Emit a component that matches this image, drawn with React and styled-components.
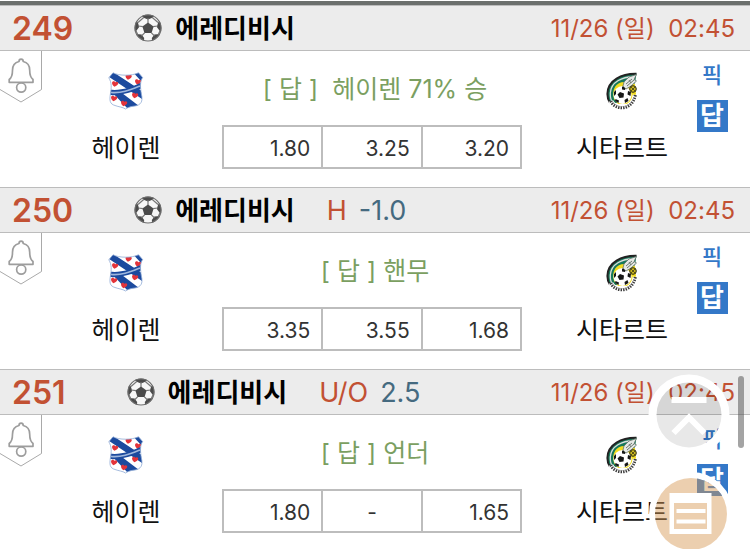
import React from "react";
import styled, { createGlobalStyle, css } from "styled-components";

const GlobalStyle = createGlobalStyle`
  *, *::before, *::after { box-sizing: border-box; }
  html { scrollbar-width: none; }
  body {
    margin: 0;
    background: #fff;
    color: #111;
    font-family: Inter, "Noto Sans CJK KR", sans-serif;
  }
  button { font: inherit; color: inherit; background: none; border: 0; padding: 0; cursor: pointer; }
`;

const RED = "#c25133";
const BLUE = "#3478c8";

const Page = styled.main`
  padding-top: 1px;
`;

const TopRule = styled.div`
  height: 4px;
  background: #6c706d;
`;

const Header = styled.header`
  display: flex;
  align-items: center;
  height: 46px;
  padding: 0 15px 0 12px;
  background: #ececec;
  border-top: 1px solid #bcbcbc;
  border-bottom: 1px solid #bcbcbc;
  white-space: nowrap;
`;

const MatchNumber = styled.span`
  margin-right: 61px;
  padding-top: 2px;
  color: ${RED};
  font-size: 32px;
  font-weight: 600;
  line-height: 42px;
`;

const League = styled.h2`
  margin: 0 32px 0 13px;
  padding-top: 2px;
  color: #000;
  font-size: 26px;
  font-weight: 600;
  line-height: 42px;
`;

const MarketKind = styled.span`
  margin-right: 12px;
  color: ${RED};
  font-size: 27px;
`;

const MarketLine = styled.span`
  color: #456a80;
  font-size: 27px;
`;

const Kickoff = styled.time`
  margin-left: auto;
  padding-top: 2px;
  color: ${RED};
  font-size: 24px;
  line-height: 42px;
  white-space: pre;
`;

const Body = styled.div`
  display: grid;
  grid-template-columns: 74px 104px 1fr 112px 68px;
  align-items: start;
  height: 136px;
  padding-right: 4px;
`;

const AlarmButton = styled.button`
  display: block;
  justify-self: start;
  line-height: 0;
`;

const Team = styled.div`
  display: flex;
  flex-direction: column;
  align-items: center;
  gap: 17px;
  padding-top: 21px;
  font-size: 25px;
  line-height: 40px;
  white-space: nowrap;
`;

const Middle = styled.div`
  display: flex;
  flex-direction: column;
  align-items: center;
  gap: 16px;
  padding-top: 18px;
`;

const Answer = styled.p`
  margin: 0;
  padding-left: 6px;
  color: #7b9f61;
  font-size: 25px;
  line-height: 40px;
  white-space: pre;
`;

const Odds = styled.table`
  width: 300px;
  table-layout: fixed;
  border-collapse: collapse;
`;

const Odd = styled.td`
  height: 42px;
  padding: 2px 11px 0;
  border: 2px solid #bdbdbd;
  color: #333;
  font-size: 21px;
  text-align: ${(p) => (p.$empty ? "center" : "right")};
`;

const Picks = styled.div`
  display: flex;
  flex-direction: column;
  align-items: center;
  gap: 9px;
  padding-top: 8px;
`;

const PickButton = styled.button`
  height: 32px;
  color: ${BLUE};
  font-size: 22px;
  font-weight: 500;
  line-height: 32px;
  ${(p) =>
    p.$filled &&
    css`
      width: 31px;
      background: ${BLUE};
      color: #fff;
      font-size: 26px;
      font-weight: 700;
    `}
`;

const FloatingButton = styled.button`
  position: fixed;
  right: ${(p) => p.$right}px;
  bottom: ${(p) => p.$bottom}px;
  line-height: 0;
`;

const ScrollThumb = styled.div`
  position: fixed;
  right: 6px;
  bottom: 101px;
  width: 6px;
  height: 72px;
  border-radius: 3px;
  background: rgba(80, 80, 80, 0.52);
`;

function Bell() {
  return (
    <svg width="42" height="52" viewBox="0 0 42 52" fill="none" aria-hidden="true">
      <path d="M41.5 0V38.5L21 51L0 38.5" stroke="#a9a9a9" />
      <g stroke="#9d9d9d" strokeWidth="1.7" strokeLinejoin="round">
        <path d="M19 10.5C19 7.3 23.2 7.3 23.2 10.5C28 11.5 29.7 15 29.7 19.3C29.7 24.5 30.4 26.5 33 28.5V31.3H9.2V28.5C12 26.5 12.5 24.5 12.5 19.3C12.5 15 14.5 11.5 19 10.5Z" />
        <circle cx="21.2" cy="36.6" r="4.6" />
      </g>
    </svg>
  );
}

function SoccerBall() {
  return (
    <svg width="28" height="28" viewBox="0 0 28 28" aria-hidden="true">
      <defs>
        <clipPath id="ball"><circle cx="14" cy="14" r="13.4" /></clipPath>
      </defs>
      <circle cx="14" cy="14" r="13.4" fill="#f7f7f7" />
      <g clipPath="url(#ball)">
        <g fill="#4b4b4b">
          <path d="M14 8.5L19.6 12.5L17.6 19H10.4L8.4 12.5Z" />
          <path d="M7 0H21L19 3.4L14 5.6L9 3.4Z" />
          <path d="M-1 6L3.8 8.2L5.2 13L1.8 17.5H-1Z" />
          <path d="M29 6L24.2 8.2L22.8 13L26.2 17.5H29Z" />
          <path d="M2 20L7.6 20.4L10.2 24L9.6 29H2Z" />
          <path d="M26 20L20.4 20.4L17.8 24L18.4 29H26Z" />
        </g>
        <path
          d="M14 9V4M19 12.7L23.7 12M17.2 18.6L20.5 22M10.8 18.6L7.5 22M9 12.7L4.3 12M10 3.2L4 8.5M18 3.2L24 8.5M1.8 16.5L4 21M26.2 16.5L24 21"
          stroke="#777" strokeWidth="1.2" fill="none"
        />
      </g>
      <circle cx="14" cy="14" r="13" fill="none" stroke="#6d6d6d" strokeWidth="1.2" />
    </svg>
  );
}

const HEARTS = [[20.5, 5], [7, 12], [30, 10], [6, 26.5], [27, 23.5], [16, 31.5]];

function HeerenveenCrest() {
  const outline =
    "M5 .8C11 4 24 4 30.5 .8L34.6 5.5C31.7 10 32.4 16 33.4 22C35.3 30 32.5 33 27 34C22 34.5 20 35.5 17.5 37C14.5 35 11 35 7 33.5C1.5 32 1.5 28 2.4 22C3.4 16 4 11 .8 5.8Z";
  return (
    <svg width="36" height="39" viewBox="0 0 36 39" aria-hidden="true">
      <defs><clipPath id="shield"><path d={outline} /></clipPath></defs>
      <path d={outline} fill="#fff" />
      <g clipPath="url(#shield)">
        <path d="M-2 3L5 0L34 19V27ZM23 -2L32 -1L37 6L33 9ZM2 18L10 18L31 34L20 37Z" fill="#1c4a9e" />
        <g fill="#e3343a">
          {HEARTS.map(([x, y]) => (
            <path
              key={`${x}-${y}`}
              transform={`translate(${x} ${y}) rotate(12)`}
              d="M0 2.8C-4.6 .4-3.4-2.9-1.2-2.5L0-1.7L1.2-2.5C3.6-2.9 4.2 .4 0 2.8Z"
            />
          ))}
        </g>
        <path d="M1 17.5C12 19 22 16 33.5 10.5V16.5C23 20 14 24 1 23Z" fill="#1c4a9e" />
        <path d="M3 20.5C14 21.5 22 18 32 14" stroke="#9fb7dd" strokeWidth="1.6" fill="none" />
      </g>
      <path d={outline} fill="none" stroke="#8fabd6" strokeWidth="0.8" />
    </svg>
  );
}

function FortunaCrest() {
  return (
    <svg width="32" height="39" viewBox="0 0 32 39" aria-hidden="true">
      <path d="M30.5 1.5C17 1.5 2 7 1.5 22C1.5 27 3 30 5 32L11 31L29 11Z" fill="#17795a" />
      <path d="M30.5 1.8C16 1.5 1.5 8 1.4 22C1.4 26 2.6 29 4 31" stroke="#222" strokeWidth="2" fill="none" />
      <path d="M28 4.5C16 5 5 10 4.3 21C4.2 25 5 28 6 29" stroke="#ddd" strokeWidth="1.3" fill="none" />
      <path d="M8 27C5 16 11 9 20 10L29 12L30 22L23 32H12Z" fill="#f2dc20" />
      <circle cx="16.5" cy="23" r="9" fill="#fff" />
      <g fill="#171717">
        <path d="M14 20L18 21.5L17.5 25.5L13.5 26L11.5 22.5Z" />
        <path d="M16 14.5L20 15L19 18L16 17.5Z" />
        <path d="M22 19L25 20L24.5 24L21.5 22.5Z" />
        <path d="M8 20L10 18L10 22L8 24Z" />
        <path d="M9.5 27L13 28.5L12.5 31L9 29Z" />
        <path d="M18.5 28L21.5 26L22.5 29L19 31Z" />
      </g>
      <path d="M18 10L23 5L30.5 2.5L28 7.5L30.5 9L25 14L20 17L17 14Z" fill="#e5e8e5" stroke="#65736b" strokeWidth="0.8" />
      <path d="M20 12L26 7M21 14L28 8M23 8L25 11" stroke="#6e7972" strokeWidth="1" />
      <circle cx="27" cy="17" r="3.3" fill="#cdb81c" stroke="#292916" />
      <path d="M25 15L29 19M29 15L25 19" stroke="#292916" strokeWidth="0.7" />
      <path d="M4.8 29C8 38 26 40 29.3 23" stroke="#fff" strokeWidth="5" fill="none" />
      <path d="M4.8 29C8 38 26 40 29.3 23" stroke="#3a3a3a" strokeWidth="3" strokeDasharray="1.4 1.1" fill="none" />
      <path d="M6 29C11 37 24 37 28 25" stroke="#999" strokeWidth="0.6" fill="none" />
    </svg>
  );
}

function ToTopIcon() {
  return (
    <svg width="82" height="82" viewBox="0 0 82 82" fill="none" aria-hidden="true">
      <circle cx="41" cy="41" r="36.5" stroke="#fff" strokeWidth="8" />
      <circle cx="41" cy="37" r="32.5" fill="none" />
      <circle cx="41" cy="41" r="32.5" fill="#000" fillOpacity="0.09" />
      <path d="M23.5 26H58.5" stroke="#fff" strokeWidth="6" />
      <path d="M25.5 59L41 43.5L56.5 59" stroke="#fff" strokeWidth="6" />
    </svg>
  );
}

function ListIcon() {
  return (
    <svg width="84" height="84" viewBox="0 0 84 84" fill="none" aria-hidden="true">
      <circle cx="42" cy="42" r="39" stroke="#fff" strokeWidth="6" />
      <circle cx="42" cy="42" r="36" fill="#d69955" fillOpacity="0.47" />
      <path fill="#fff" fillRule="evenodd" d="M20.5 21H62.5V62H20.5ZM25 31V57H58V31Z" />
      <path d="M27.5 39H56.5M27.5 49.5H56.5" stroke="#fff" strokeWidth="4" />
    </svg>
  );
}

const MATCHES = [
  { no: "249", answer: "[ 답 ]  헤이렌 71% 승", odds: ["1.80", "3.25", "3.20"] },
  { no: "250", kind: "H", line: "-1.0", answer: "[ 답 ] 핸무", odds: ["3.35", "3.55", "1.68"] },
  { no: "251", kind: "U/O", line: "2.5", answer: "[ 답 ] 언더", odds: ["1.80", "-", "1.65"] },
];

function Match({ match }) {
  return (
    <article>
      <Header>
        <MatchNumber>{match.no}</MatchNumber>
        <SoccerBall />
        <League>에레디비시</League>
        {match.kind && <MarketKind>{match.kind}</MarketKind>}
        {match.line && <MarketLine>{match.line}</MarketLine>}
        <Kickoff>{"11/26 (일)  02:45"}</Kickoff>
      </Header>
      <Body>
        <AlarmButton type="button" aria-label="알림"><Bell /></AlarmButton>
        <Team><HeerenveenCrest />헤이렌</Team>
        <Middle>
          <Answer>{match.answer}</Answer>
          <Odds>
            <tbody>
              <tr>
                {match.odds.map((value, i) => (
                  <Odd key={i} $empty={value === "-"}>{value}</Odd>
                ))}
              </tr>
            </tbody>
          </Odds>
        </Middle>
        <Team><FortunaCrest />시타르트</Team>
        <Picks>
          <PickButton type="button">픽</PickButton>
          <PickButton type="button" $filled>답</PickButton>
        </Picks>
      </Body>
    </article>
  );
}

export default function App() {
  return (
    <>
      <GlobalStyle />
      <Page>
        <TopRule />
        {MATCHES.map((m) => <Match key={m.no} match={m} />)}
      </Page>
      <FloatingButton type="button" aria-label="맨 위로" $right={20} $bottom={93}><ToTopIcon /></FloatingButton>
      <FloatingButton type="button" aria-label="목록" $right={17} $bottom={-7}><ListIcon /></FloatingButton>
      <ScrollThumb />
    </>
  );
}
